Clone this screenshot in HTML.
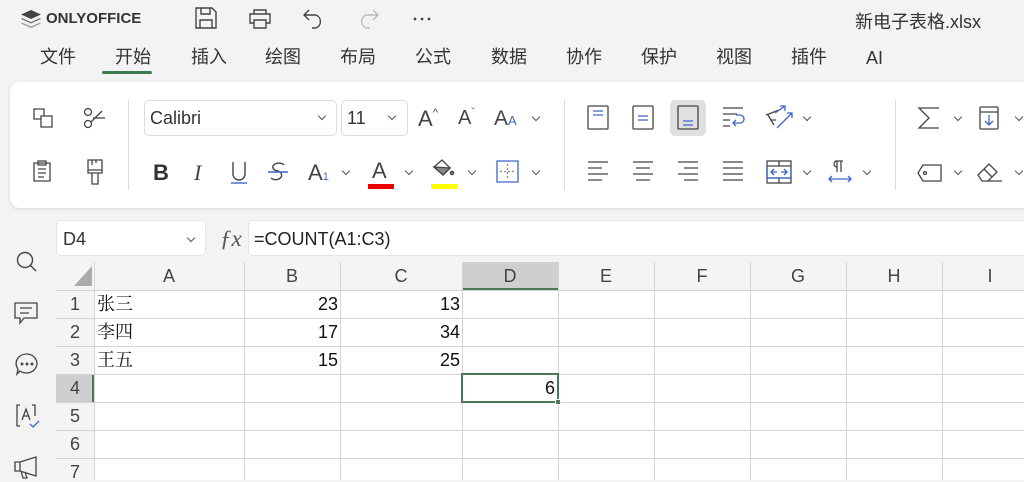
<!DOCTYPE html>
<html><head><meta charset="utf-8"><style>
*{margin:0;padding:0;box-sizing:border-box}
body{width:1024px;height:480px;overflow:hidden;background:#f3f3f3;font-family:"Liberation Sans","Noto Sans CJK SC",sans-serif;color:#333;position:relative}
.a{position:absolute}
.menu{top:45px;font-size:18px;color:#333;line-height:24px}
.card{left:10px;top:82px;width:1030px;height:126px;background:#fff;border-radius:10px;box-shadow:0 1px 3px rgba(0,0,0,.12)}
svg{position:absolute;overflow:visible}
.box{background:#fff;border:1px solid #dcdcdc;border-radius:5px}
.ch{position:absolute;width:6px;height:6px;border-right:1.3px solid #555;border-bottom:1.3px solid #555;transform:rotate(45deg)}
.vl{position:absolute;width:1px;background:#d4d4d4}
.hl{position:absolute;height:1px;background:#d4d4d4}
.hd{position:absolute;font-size:18px;color:#444;text-align:center;line-height:20px}
.c{position:absolute;font-size:18px;color:#111;line-height:20px}
.t{position:absolute;line-height:1}
</style></head><body>
<svg class="a" style="left:20px;top:9px" width="22" height="20" viewBox="0 0 22 20"><path d="M11 1 L21 5.5 L11 10 L1 5.5Z" fill="#444"/><path d="M2 9 L11 13 L20 9 L21 10 L11 14.5 L1 10Z" fill="#777"/><path d="M2 13.5 L11 17.5 L20 13.5 L21 14.5 L11 19 L1 14.5Z" fill="#999"/></svg>
<div class="a" style="left:46px;top:10px;font-size:15px;font-weight:bold;color:#333">ONLYOFFICE</div>
<svg style="left:195px;top:7px" width="22" height="22" viewBox="0 0 22 22" fill="none" stroke="#444" stroke-width="1.4"><path d="M1 1H17L21 5V21H1Z"/><path d="M6 1V7H15V1M5 21V13H17V21"/></svg>
<svg style="left:248px;top:9px" width="24" height="20" viewBox="0 0 24 20" fill="none" stroke="#444" stroke-width="1.4"><path d="M6 5V1H18V5M6 14H2V5H22V14H18M6 11H18V19H6Z"/></svg>
<svg style="left:303px;top:9px" width="22" height="20" viewBox="0 0 22 20" fill="none" stroke="#444" stroke-width="1.4"><path d="M6 1L1 6L6 11M1 6H13A7 7 0 0 1 13 19H9"/></svg>
<svg style="left:357px;top:9px" width="22" height="20" viewBox="0 0 22 20" fill="none" stroke="#bbb" stroke-width="1.4"><path d="M16 1L21 6L16 11M21 6H9A7 7 0 0 0 9 19H13"/></svg>
<svg style="left:413px;top:17px" width="18" height="4"><circle cx="2" cy="2" r="1.4" fill="#444"/><circle cx="9" cy="2" r="1.4" fill="#444"/><circle cx="16" cy="2" r="1.4" fill="#444"/></svg>
<div class="a" style="left:855px;top:10px;font-size:18px;color:#333;line-height:24px">新电子表格.xlsx</div>
<div class="a menu" style="left:40px">文件</div>
<div class="a menu" style="left:115px">开始</div>
<div class="a" style="left:102px;top:71px;width:50px;height:3px;background:#3d7a4f;border-radius:2px"></div>
<div class="a menu" style="left:191px">插入</div>
<div class="a menu" style="left:265px">绘图</div>
<div class="a menu" style="left:340px">布局</div>
<div class="a menu" style="left:415px">公式</div>
<div class="a menu" style="left:491px">数据</div>
<div class="a menu" style="left:566px">协作</div>
<div class="a menu" style="left:641px">保护</div>
<div class="a menu" style="left:716px">视图</div>
<div class="a menu" style="left:791px">插件</div>
<div class="a menu" style="left:866px;top:46px">AI</div>

<div class="a card"></div>
<svg style="left:33px;top:108px" width="20" height="20" fill="none" stroke="#444" stroke-width="1.3"><path d="M1 1H11V11H1Z"/><path d="M8 8H19V19H8Z" fill="#fff"/></svg>
<svg style="left:83px;top:108px" width="24" height="20" fill="none" stroke="#444" stroke-width="1.3"><circle cx="5" cy="4" r="3.5"/><circle cx="5" cy="16" r="3.5"/><path d="M8 14L19 3M10 10H22"/></svg>
<svg style="left:33px;top:160px" width="18" height="22" fill="none" stroke="#444" stroke-width="1.3"><path d="M1 3H17V21H1Z M5 1H13V5H5Z M5 9H13M5 13H13M5 17H11"/></svg>
<svg style="left:87px;top:159px" width="16" height="26" fill="none" stroke="#444" stroke-width="1.3"><path d="M1 1H15V14H1Z M5 1V6M9 1V4M1 11H15M5 14V25H11V14"/></svg>
<div class="a" style="left:128px;top:100px;width:1px;height:90px;background:#ddd"></div>
<div class="a box" style="left:144px;top:100px;width:193px;height:36px"></div>
<div class="t" style="left:150px;top:109px;font-size:18px">Calibri</div>
<div class="ch" style="left:319px;top:113px"></div>
<div class="a box" style="left:341px;top:100px;width:67px;height:36px"></div>
<div class="t" style="left:347px;top:109px;font-size:18px">11</div>
<div class="ch" style="left:389px;top:113px"></div>
<div class="t" style="left:418px;top:108px;font-size:22px;color:#444">A<span style="font-size:11px;vertical-align:top">^</span></div>
<div class="t" style="left:458px;top:108px;font-size:20px;color:#444">A<span style="font-size:10px;vertical-align:top;color:#3a66c8">ˇ</span></div>
<div class="t" style="left:494px;top:108px;font-size:21px;color:#444">A<span style="font-size:13px;color:#3a66c8">A</span></div>
<div class="ch" style="left:533px;top:114px"></div>
<div class="t" style="left:153px;top:162px;font-size:22px;font-weight:bold;color:#333">B</div>
<div class="t" style="left:194px;top:162px;font-size:22px;font-style:italic;color:#444;font-family:'Liberation Serif',serif">I</div>
<svg style="left:231px;top:161px" width="18" height="24" fill="none" stroke="#444" stroke-width="1.4"><path d="M2 1V13A6 6 0 0 0 14 13V1"/><path d="M0 22H16" stroke="#3a66c8"/></svg>
<svg style="left:268px;top:161px" width="20" height="22" fill="none" stroke="#444" stroke-width="1.4"><path d="M16 4A6 4 0 1 0 10 10A6 4.5 0 1 1 3 17"/><path d="M0 11H20" stroke="#3a66c8"/></svg>
<div class="t" style="left:308px;top:162px;font-size:22px;color:#444">A<span style="font-size:11px;color:#3a66c8">1</span></div>
<div class="ch" style="left:343px;top:168px"></div>
<div class="t" style="left:372px;top:160px;font-size:22px;color:#444">A</div>
<div class="a" style="left:368px;top:184px;width:26px;height:5px;background:#e00"></div>
<div class="ch" style="left:406px;top:168px"></div>
<svg style="left:430px;top:158px" width="30" height="24" fill="none" stroke="#444" stroke-width="1.3"><path d="M4 9L12 2L20 10L13 17Z"/><path d="M4 9L13 17L20 10Z" fill="#888"/><circle cx="22" cy="15" r="1.6" fill="#888"/></svg>
<div class="a" style="left:431px;top:184px;width:26px;height:5px;background:#ff0"></div>
<div class="ch" style="left:469px;top:168px"></div>
<svg style="left:496px;top:160px" width="24" height="24" fill="none" stroke="#3a66c8" stroke-width="1.3"><path d="M1 1H22V22H1Z"/><path d="M11.5 4V19M4 11.5H19" stroke="#888" stroke-dasharray="2 2"/></svg>
<div class="ch" style="left:533px;top:168px"></div>
<div class="a" style="left:564px;top:100px;width:1px;height:90px;background:#ddd"></div>
<svg style="left:587px;top:105px" width="24" height="26" fill="none" stroke="#444" stroke-width="1.3"><rect x="1" y="1" width="20" height="23" rx="1"/><path d="M6 6H16M6 10H16" stroke="#3a66c8"/></svg>
<svg style="left:632px;top:105px" width="24" height="26" fill="none" stroke="#444" stroke-width="1.3"><rect x="1" y="1" width="20" height="23" rx="1"/><path d="M6 11H16M6 15H16" stroke="#3a66c8"/></svg>
<div class="a" style="left:670px;top:100px;width:36px;height:36px;background:#e0e0e0;border-radius:5px"></div>
<svg style="left:677px;top:105px" width="24" height="26" fill="none" stroke="#444" stroke-width="1.3"><rect x="1" y="1" width="20" height="23" rx="1"/><path d="M6 16H16M6 20H16" stroke="#3a66c8"/></svg>
<svg style="left:722px;top:107px" width="24" height="22" fill="none" stroke="#444" stroke-width="1.3"><path d="M1 1H21M1 7H15M1 13H8M1 19H8"/><path d="M14 8H18A4 4 0 0 1 18 16H11M14 13L11 16L14 19" stroke="#3a66c8"/></svg>
<svg style="left:765px;top:105px" width="28" height="26" fill="none" stroke="#444" stroke-width="1.3"><path d="M1 10L14 5M3 10L9 20M5 15H11"/><path d="M10 8L20 1M15 1H20V6M12 23L27 8M22 8H27V13" stroke="#3a66c8"/></svg>
<div class="ch" style="left:804px;top:114px"></div>
<svg style="left:587px;top:161px" width="22" height="20" fill="none" stroke="#444" stroke-width="1.3"><path d="M1 1H21M1 7H15M1 13H21M1 19H15"/></svg>
<svg style="left:632px;top:161px" width="22" height="20" fill="none" stroke="#444" stroke-width="1.3"><path d="M1 1H21M4 7H18M1 13H21M4 19H18"/></svg>
<svg style="left:677px;top:161px" width="22" height="20" fill="none" stroke="#444" stroke-width="1.3"><path d="M1 1H21M7 7H21M1 13H21M7 19H21"/></svg>
<svg style="left:722px;top:161px" width="22" height="20" fill="none" stroke="#444" stroke-width="1.3"><path d="M1 1H21M1 7H21M1 13H21M1 19H21"/></svg>
<svg style="left:766px;top:160px" width="26" height="24" fill="none" stroke="#444" stroke-width="1.3"><rect x="1" y="1" width="24" height="22"/><path d="M1 6H25M1 18H25M13 1V6M13 18V23" /><path d="M1 6V18H25V6" stroke="#3a66c8"/><path d="M5 12H11M8 9L5 12L8 15M15 12H21M18 9L21 12L18 15" stroke="#3a66c8"/></svg>
<div class="ch" style="left:804px;top:168px"></div>
<svg style="left:828px;top:160px" width="24" height="24" fill="none" stroke="#444" stroke-width="1.3"><path d="M9 1V12M13 1V12M7 1H15M9 1A3 3 0 0 0 9 7"/><path d="M1 19H23M4 16L1 19L4 22M20 16L23 19L20 22" stroke="#3a66c8"/></svg>
<div class="ch" style="left:864px;top:168px"></div>
<div class="a" style="left:895px;top:100px;width:1px;height:90px;background:#ddd"></div>
<svg style="left:918px;top:107px" width="22" height="22" fill="none" stroke="#444" stroke-width="1.3"><path d="M21 1H1L11 11L1 21H21"/></svg>
<div class="ch" style="left:955px;top:114px"></div>
<svg style="left:979px;top:106px" width="22" height="24" fill="none" stroke="#444" stroke-width="1.3"><rect x="1" y="1" width="18" height="22" rx="1"/><path d="M1 6H19"/><path d="M10 9V19M6 15L10 19L14 15" stroke="#3a66c8"/></svg>
<div class="ch" style="left:1016px;top:114px"></div>
<svg style="left:917px;top:164px" width="26" height="18" fill="none" stroke="#444" stroke-width="1.3"><path d="M6 1H24V17H6L1 9Z"/><circle cx="8" cy="9" r="1.5"/></svg>
<div class="ch" style="left:955px;top:168px"></div>
<svg style="left:977px;top:162px" width="26" height="22" fill="none" stroke="#444" stroke-width="1.3"><path d="M1 13L12 2L20 10L11 19H5Z M7 7L15 15 M11 19H25"/></svg>
<div class="ch" style="left:1016px;top:168px"></div>

<svg style="left:16px;top:251px" width="22" height="22" fill="none" stroke="#444" stroke-width="1.4"><circle cx="9" cy="9" r="7.5"/><path d="M14.5 14.5L20 20"/></svg>
<svg style="left:14px;top:302px" width="24" height="24" fill="none" stroke="#444" stroke-width="1.3"><path d="M1 1H23V16H10L6 21V16H1Z M6 6H18M6 11H15"/></svg>
<svg style="left:15px;top:353px" width="24" height="22" fill="none" stroke="#444" stroke-width="1.3"><path d="M12 1A10.5 9.5 0 1 1 5 18L2 21L3 16A10.5 9.5 0 0 1 12 1Z"/><circle cx="7" cy="11" r=".8" fill="#444"/><circle cx="12" cy="11" r=".8" fill="#444"/><circle cx="17" cy="11" r=".8" fill="#444"/></svg>
<svg style="left:16px;top:404px" width="24" height="24" fill="none" stroke="#444" stroke-width="1.3"><path d="M4 1H1V22H4M16 1H19V12"/><path d="M6 16L10 5L14 16M7.5 12H12.5"/><path d="M14 20L17 23L23 17" stroke="#3a66c8"/></svg>
<svg style="left:14px;top:456px" width="24" height="24" fill="none" stroke="#444" stroke-width="1.3"><path d="M1 6H6L22 1V20L6 15H1Z M6 6V15M7 15L9 22H13L11 16"/></svg>

<div class="a box" style="left:56px;top:220px;width:150px;height:36px;border-color:#e4e4e4"></div>
<div class="t" style="left:63px;top:230px;font-size:18px;color:#333">D4</div>
<div class="ch" style="left:188px;top:235px"></div>
<div class="t" style="left:220px;top:227px;font-size:23px;font-style:italic;font-family:'Liberation Serif',serif;color:#555">ƒx</div>
<div class="a box" style="left:248px;top:220px;width:800px;height:36px;border-color:#e4e4e4"></div>
<div class="t" style="left:254px;top:230px;font-size:18px;color:#222">=COUNT(A1:C3)</div>

<div class="a" style="left:56px;top:262px;width:968px;height:218px;background:#fff"></div>
<div class="a" style="left:56px;top:262px;width:968px;height:28px;background:#f4f4f4"></div>
<div class="a" style="left:56px;top:290px;width:38px;height:190px;background:#f4f4f4"></div>
<div class="a" style="left:462px;top:262px;width:96px;height:28px;background:#cfcfcf;border-bottom:2px solid #4a7757"></div>
<div class="a" style="left:56px;top:374px;width:38px;height:28px;background:#cfcfcf;border-right:2px solid #4a7757"></div>
<svg style="left:73px;top:265px" width="20" height="22"><path d="M19 1V21H1Z" fill="#aaa"/></svg>
<div class="vl" style="left:94px;top:262px;height:218px"></div>
<div class="vl" style="left:244px;top:262px;height:218px"></div>
<div class="vl" style="left:340px;top:262px;height:218px"></div>
<div class="vl" style="left:462px;top:262px;height:218px"></div>
<div class="vl" style="left:558px;top:262px;height:218px"></div>
<div class="vl" style="left:654px;top:262px;height:218px"></div>
<div class="vl" style="left:750px;top:262px;height:218px"></div>
<div class="vl" style="left:846px;top:262px;height:218px"></div>
<div class="vl" style="left:942px;top:262px;height:218px"></div>
<div class="hl" style="left:56px;top:290px;width:968px"></div>
<div class="hl" style="left:56px;top:318px;width:968px"></div>
<div class="hl" style="left:56px;top:346px;width:968px"></div>
<div class="hl" style="left:56px;top:374px;width:968px"></div>
<div class="hl" style="left:56px;top:402px;width:968px"></div>
<div class="hl" style="left:56px;top:430px;width:968px"></div>
<div class="hl" style="left:56px;top:458px;width:968px"></div>
<div class="hd" style="left:94px;top:266px;width:150px">A</div>
<div class="hd" style="left:244px;top:266px;width:96px">B</div>
<div class="hd" style="left:340px;top:266px;width:122px">C</div>
<div class="hd" style="left:462px;top:266px;width:96px">D</div>
<div class="hd" style="left:558px;top:266px;width:96px">E</div>
<div class="hd" style="left:654px;top:266px;width:96px">F</div>
<div class="hd" style="left:750px;top:266px;width:96px">G</div>
<div class="hd" style="left:846px;top:266px;width:96px">H</div>
<div class="hd" style="left:942px;top:266px;width:96px">I</div>
<div class="hd" style="left:56px;top:294px;width:38px">1</div>
<div class="hd" style="left:56px;top:322px;width:38px">2</div>
<div class="hd" style="left:56px;top:350px;width:38px">3</div>
<div class="hd" style="left:56px;top:378px;width:38px">4</div>
<div class="hd" style="left:56px;top:406px;width:38px">5</div>
<div class="hd" style="left:56px;top:434px;width:38px">6</div>
<div class="hd" style="left:56px;top:462px;width:38px">7</div>
<div class="c" style="left:97px;top:293px;font-family:'Noto Serif CJK SC',serif">张三</div>
<div class="c" style="left:97px;top:321px;font-family:'Noto Serif CJK SC',serif">李四</div>
<div class="c" style="left:97px;top:349px;font-family:'Noto Serif CJK SC',serif">王五</div>
<div class="c" style="left:244px;top:294px;width:94px;text-align:right">23</div>
<div class="c" style="left:244px;top:322px;width:94px;text-align:right">17</div>
<div class="c" style="left:244px;top:350px;width:94px;text-align:right">15</div>
<div class="c" style="left:340px;top:294px;width:120px;text-align:right">13</div>
<div class="c" style="left:340px;top:322px;width:120px;text-align:right">34</div>
<div class="c" style="left:340px;top:350px;width:120px;text-align:right">25</div>
<div class="a" style="left:461px;top:373px;width:98px;height:30px;border:2px solid #4a7757"></div>
<div class="a" style="left:555px;top:399px;width:6px;height:6px;background:#4a7757;border:1px solid #fff"></div>
<div class="c" style="left:462px;top:378px;width:93px;text-align:right">6</div>
</body></html>
